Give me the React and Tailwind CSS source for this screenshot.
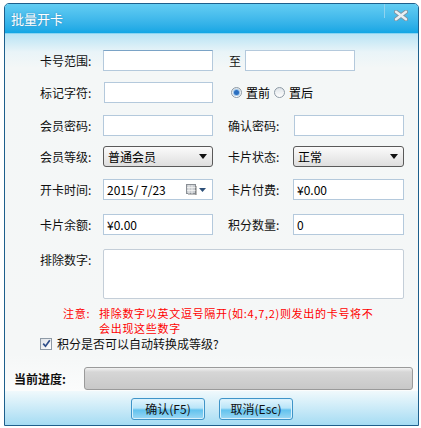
const FONT = { fontFamily: '"Noto Sans CJK SC", "Noto Sans", sans-serif' };
const INPUT_CLS = 'h-[21px] bg-white border border-[#b4c9dc] px-[3px] text-[12px] leading-[19px] text-black';
const LABEL_CLS = 'text-[12px] leading-[21px] text-[#111]';

function Arrow() {
  return (
    <svg width="8" height="5" viewBox="0 0 8 5"><path d="M0 0h8L4 5z" fill="#111" /></svg>
  );
}

function Select({ value, width }) {
  return (
    <div className={`flex items-center justify-between h-[21px] ${width} rounded-[3px] border border-[#5a5a5a] bg-gradient-to-b from-[#fbfbfb] to-[#dedede] pl-[4px] pr-[5px]`}>
      <span className="text-[12px] leading-[19px]">{value}</span>
      <Arrow />
    </div>
  );
}

function Radio({ checked, label }) {
  return (
    <div className="flex items-center gap-[4px]">
      <span className="w-[11px] h-[11px] rounded-full border border-[#8d9aa6] bg-gradient-to-b from-[#dfe4e8] to-white flex items-center justify-center">
        {checked && <span className="w-[5px] h-[5px] rounded-full bg-[#2b6fc0] shadow-[0_0_0_1px_#9cc4ea]" />}
      </span>
      <span className="text-[12px]">{label}</span>
    </div>
  );
}

function Row({ className = '', children }) {
  return <div className={`flex items-center h-[21px] ${className}`}>{children}</div>;
}

function Button({ children }) {
  return (
    <button className="w-[74px] h-[22px] rounded-[3px] border border-[#3f94c8] bg-[linear-gradient(to_bottom,#e3f5fd_0%,#b9e5f9_45%,#62c2ee_55%,#9bd8f4_100%)] text-[12px] text-[#111] leading-[20px] shadow-[inset_0_0_0_1px_#d8f1fc]">
      {children}
    </button>
  );
}

export default function App() {
  return (
    <div className="w-[421px] h-[428px] bg-white pt-[3px] pl-[4px] overflow-hidden" style={FONT}>
      <div className="w-[415px] h-[423px] border border-[#1d5f8c] rounded-t-[5px] flex flex-col overflow-hidden bg-[#f5f7f7]">
        {/* title bar */}
        <div className="relative h-[30px] shrink-0 bg-gradient-to-b from-[#62cdf3] to-[#11a6e4] border-b border-[#8ad4f1] flex items-center pl-[6px]">
          <span className="text-[13px] text-white [text-shadow:0_0_2px_#3a8ab8]">批量开卡</span>
          <div className="absolute left-[379px] top-0 h-[14px] w-px bg-[#8fd3ef]" />
          <svg className="absolute right-[10px] top-[6px]" width="14" height="11" viewBox="0 0 14 11">
            <path d="M2 1.8L12 9.2M12 1.8L2 9.2" stroke="#7f95a3" strokeWidth="4.2" strokeLinecap="round" />
            <path d="M2 1.8L12 9.2M12 1.8L2 9.2" stroke="#e9eff3" strokeWidth="2.4" strokeLinecap="round" />
          </svg>
        </div>

        {/* body */}
        <div className="flex-1 flex flex-col pt-[16px] bg-[linear-gradient(to_bottom,#b9e4f5_0px,#e9f4f8_18px,#f4f7f7_34px,#f5f7f7_320px,#fbfcfc_100%)]">
          <Row>
            <span className={`${LABEL_CLS} ml-[35px] w-[63px]`}>卡号范围:</span>
            <div className={`${INPUT_CLS} w-[110px] border-t-[#7aa3c6]`} />
            <span className={`${LABEL_CLS} ml-[16px] w-[16px]`}>至</span>
            <div className={`${INPUT_CLS} w-[110px]`} />
          </Row>
          <Row className="mt-[11px]">
            <span className={`${LABEL_CLS} ml-[35px] w-[64px]`}>标记字符:</span>
            <div className={`${INPUT_CLS} w-[109px]`} />
            <div className="ml-[18px] flex items-center gap-[4px]">
              <Radio checked label="置前" />
              <Radio label="置后" />
            </div>
          </Row>
          <Row className="mt-[12px]">
            <span className={`${LABEL_CLS} ml-[35px] w-[63px]`}>会员密码:</span>
            <div className={`${INPUT_CLS} w-[110px] border-[#8fb2d2]`} />
            <span className={`${LABEL_CLS} ml-[15px] w-[66px]`}>确认密码:</span>
            <div className={`${INPUT_CLS} w-[110px]`} />
          </Row>
          <Row className="mt-[10px]">
            <span className={`${LABEL_CLS} ml-[35px] w-[63px]`}>会员等级:</span>
            <Select value="普通会员" width="w-[110px]" />
            <span className={`${LABEL_CLS} ml-[15px] w-[65px]`}>卡片状态:</span>
            <Select value="正常" width="w-[111px]" />
          </Row>
          <Row className="mt-[12px]">
            <span className={`${LABEL_CLS} ml-[35px] w-[63px]`}>开卡时间:</span>
            <div className={`${INPUT_CLS} w-[110px] flex items-center justify-between pr-[6px]`}>
              <span>2015/ 7/23</span>
              <div className="flex items-center gap-[2px]">
                <svg width="11" height="11" viewBox="0 0 11 11">
                  <rect x="0.5" y="0.5" width="9" height="9" fill="#c9ccd0" stroke="#8a8f95" />
                  <path d="M3 1v9M6 1v9M1 3.5h9M1 6.5h9" stroke="#f4f4f4" strokeWidth="0.8" />
                  <path d="M10 2v9H2" stroke="#777" fill="none" />
                </svg>
                <svg width="7" height="4" viewBox="0 0 7 4"><path d="M0 0h7L3.5 4z" fill="#2d4f78" /></svg>
              </div>
            </div>
            <span className={`${LABEL_CLS} ml-[15px] w-[65px]`}>卡片付费:</span>
            <div className={`${INPUT_CLS} w-[111px]`}>¥0.00</div>
          </Row>
          <Row className="mt-[14px]">
            <span className={`${LABEL_CLS} ml-[35px] w-[63px]`}>卡片余额:</span>
            <div className={`${INPUT_CLS} w-[110px]`}>¥0.00</div>
            <span className={`${LABEL_CLS} ml-[15px] w-[65px]`}>积分数量:</span>
            <div className={`${INPUT_CLS} w-[111px]`}>0</div>
          </Row>
          <div className="flex mt-[14px]">
            <span className={`${LABEL_CLS} ml-[35px] w-[63px] leading-[16px]`}>排除数字:</span>
            <div className="w-[301px] h-[50px] bg-white border border-[#c4ced8] rounded-[2px]" />
          </div>
          <div className="flex mt-[7px] ml-[58px] text-[11px] leading-[15px] tracking-[0.7px] text-[#ff0000]">
            <span className="w-[36px]">注意:</span>
            <div className="flex flex-col">
              <span>排除数字以英文逗号隔开(如:4,7,2)则发出的卡号将不</span>
              <span>会出现这些数字</span>
            </div>
          </div>
          <div className="flex items-center h-[13px] mt-[1px] ml-[35px] gap-[5px]">
            <span className="w-[12px] h-[12px] border border-[#8e9aa6] bg-gradient-to-br from-[#dfe3e8] to-white flex items-center justify-center">
              <svg width="9" height="9" viewBox="0 0 9 9"><path d="M1.2 4.6L3.5 7.2L7.8 1.2" stroke="#2f4f8a" strokeWidth="1.7" fill="none" /></svg>
            </span>
            <span className="text-[12px] text-[#111]">积分是否可以自动转换成等级?</span>
          </div>
          <div className="flex items-center mt-[17px] ml-[9px]">
            <span className="w-[70px] text-[12px] font-bold text-[#111]">当前进度:</span>
            <div className="w-[329px] h-[23px] rounded-[3px] border border-[#9a9a9a] bg-[linear-gradient(to_bottom,#f2f2f2_0px,#d6d6d6_4px,#c8c8c8_100%)]" />
          </div>
        </div>

        {/* footer */}
        <div className="h-[34px] shrink-0 flex justify-center gap-[14px] pt-[7px] pl-[1px] bg-gradient-to-b from-[#f0f9fc] to-[#a5dcf3]">
          <Button>确认(F5)</Button>
          <Button>取消(Esc)</Button>
        </div>
      </div>
    </div>
  );
}
